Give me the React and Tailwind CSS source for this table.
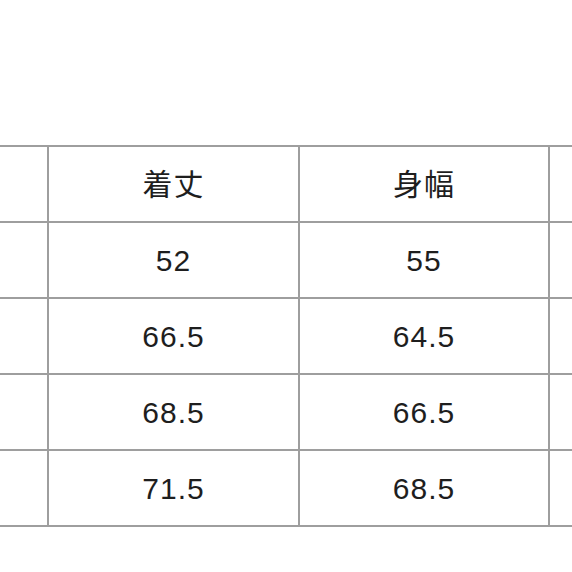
const header = ["", "着丈", "身幅", ""];
const rows = [
  ["", "52", "55", ""],
  ["", "66.5", "64.5", ""],
  ["", "68.5", "66.5", ""],
  ["", "71.5", "68.5", ""],
];

const Cell = ({ children }) => (
  <div className="flex items-center justify-center border-r-2 border-b-2 border-[#9e9e9e] h-[76px] text-[30px] tracking-[1px] text-[#1e1e1e]">
    {children}
  </div>
);

const App = () => {
  return (
    <div className="h-screen w-full bg-white overflow-hidden pt-[145px]" style={{ fontFamily: '"Liberation Sans", "Noto Sans CJK JP", sans-serif' }}>
      <div className="grid grid-cols-[49px_251px_250px_60px] border-t-2 border-[#9e9e9e] w-[610px]">
        {[header, ...rows].map((row, i) =>
          row.map((c, j) => <Cell key={i + "-" + j}>{c}</Cell>)
        )}
      </div>
    </div>
  );
};

export default App;
